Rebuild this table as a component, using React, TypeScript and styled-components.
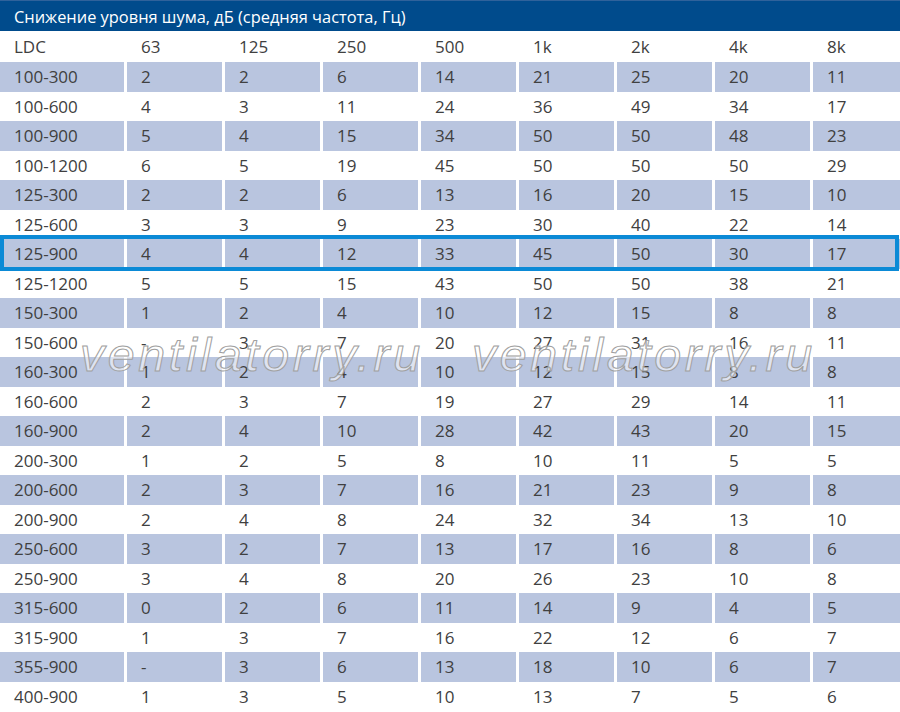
import React from 'react';
import styled, { createGlobalStyle } from 'styled-components';

const GlobalStyle = createGlobalStyle`
  html, body {
    margin: 0;
    padding: 0;
    background: #ffffff;
  }
  body {
    font-family: 'Open Sans', 'Noto Sans', sans-serif;
    color: #404040;
    overflow: hidden;
  }
`;

const Page = styled.div`
  position: relative;
  width: 900px;
  height: 712px;
  overflow: hidden;
`;

const TitleBar = styled.div`
  height: 30px;
  border-top: 1px solid #2f629b;
  background-color: #004b8c;
  color: #ffffff;
  display: flex;
  align-items: center;
  padding-left: 14px;
  font-size: 16.4px;
`;

const Row = styled.div<{ $height: number; $highlight?: boolean }>`
  position: relative;
  display: grid;
  grid-template-columns: 124px repeat(7, 95px) 1fr;
  column-gap: 3px;
  height: ${props => props.$height}px;

  ${props => props.$highlight && `
    &::after {
      content: '';
      position: absolute;
      top: -4px;
      bottom: -2px;
      left: 0;
      right: 1px;
      border: 4.5px solid #0b8ad6;
      pointer-events: none;
    }
  `}
`;

const Cell = styled.div<{ $shaded?: boolean }>`
  display: flex;
  align-items: center;
  padding-left: 14px;
  font-size: 17px;
  color: #404040;
  background-color: ${props => props.$shaded ? '#b9c5df' : 'transparent'};
`;

const WatermarkLayer = styled.div`
  position: absolute;
  top: 327px;
  left: 80px;
  display: flex;
  gap: 52px;
  pointer-events: none;
`;

const WatermarkText = styled.span`
  display: inline-block;
  width: 340px;
  font-family: 'Liberation Sans', Arial, sans-serif;
  font-style: italic;
  font-size: 47px;
  letter-spacing: 3.5px;
  color: rgba(255, 255, 255, 0.55);
  -webkit-text-stroke: 1px #a0a0a0;
  transform: scaleX(1.03);
  transform-origin: left center;
`;

const headers = ['LDC', '63', '125', '250', '500', '1k', '2k', '4k', '8k'];

const rows: string[][] = [
  ['100-300', '2', '2', '6', '14', '21', '25', '20', '11'],
  ['100-600', '4', '3', '11', '24', '36', '49', '34', '17'],
  ['100-900', '5', '4', '15', '34', '50', '50', '48', '23'],
  ['100-1200', '6', '5', '19', '45', '50', '50', '50', '29'],
  ['125-300', '2', '2', '6', '13', '16', '20', '15', '10'],
  ['125-600', '3', '3', '9', '23', '30', '40', '22', '14'],
  ['125-900', '4', '4', '12', '33', '45', '50', '30', '17'],
  ['125-1200', '5', '5', '15', '43', '50', '50', '38', '21'],
  ['150-300', '1', '2', '4', '10', '12', '15', '8', '8'],
  ['150-600', '-', '3', '7', '20', '27', '31', '16', '11'],
  ['160-300', '1', '2', '4', '10', '12', '15', '8', '8'],
  ['160-600', '2', '3', '7', '19', '27', '29', '14', '11'],
  ['160-900', '2', '4', '10', '28', '42', '43', '20', '15'],
  ['200-300', '1', '2', '5', '8', '10', '11', '5', '5'],
  ['200-600', '2', '3', '7', '16', '21', '23', '9', '8'],
  ['200-900', '2', '4', '8', '24', '32', '34', '13', '10'],
  ['250-600', '3', '2', '7', '13', '17', '16', '8', '6'],
  ['250-900', '3', '4', '8', '20', '26', '23', '10', '8'],
  ['315-600', '0', '2', '6', '11', '14', '9', '4', '5'],
  ['315-900', '1', '3', '7', '16', '22', '12', '6', '7'],
  ['355-900', '-', '3', '6', '13', '18', '10', '6', '7'],
  ['400-900', '1', '3', '5', '10', '13', '7', '5', '6'],
];

const HIGHLIGHTED = '125-900';

const App: React.FC = () => {
  return (
    <Page>
      <GlobalStyle />
      <TitleBar>Снижение уровня шума, дБ (средняя частота, Гц)</TitleBar>

      <Row $height={31}>
        {headers.map(h => (
          <Cell key={h}>{h}</Cell>
        ))}
      </Row>

      {rows.map((row, i) => (
        <Row key={row[0]} $height={29.5} $highlight={row[0] === HIGHLIGHTED}>
          {row.map((value, j) => (
            <Cell key={j} $shaded={i % 2 === 0}>{value}</Cell>
          ))}
        </Row>
      ))}

      <WatermarkLayer>
        <WatermarkText>ventilatorry.ru</WatermarkText>
        <WatermarkText>ventilatorry.ru</WatermarkText>
      </WatermarkLayer>
    </Page>
  );
};

export default App;
